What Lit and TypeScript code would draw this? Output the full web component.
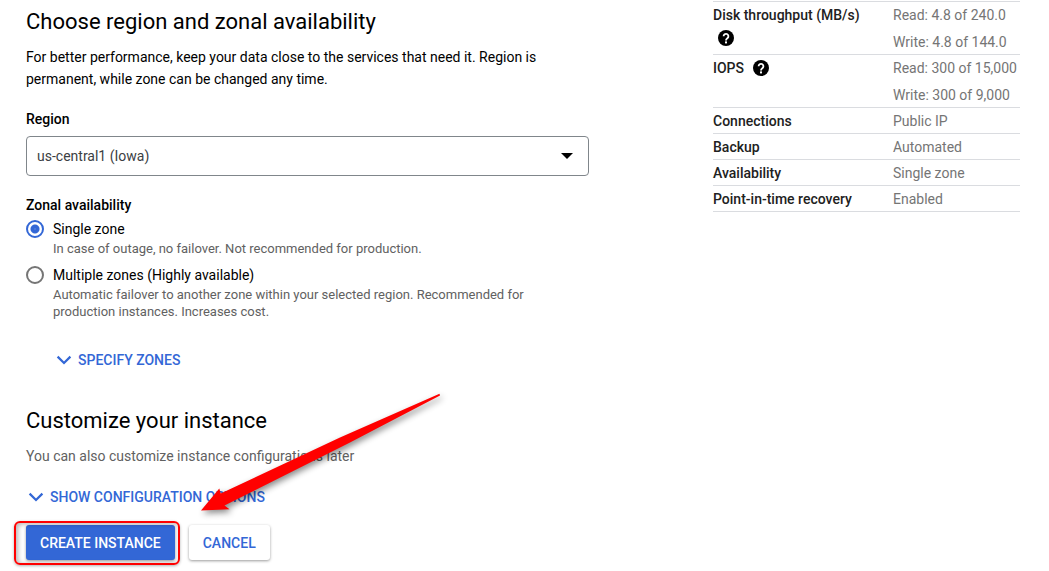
import { LitElement, html, css } from "lit";
import { customElement, property, state } from "lit/decorators.js";

interface SummaryRow {
  label: string;
  help?: boolean;
  values: string[];
}

const summary: SummaryRow[] = [
  { label: "Disk throughput (MB/s)", help: true, values: ["Read: 4.8 of 240.0", "Write: 4.8 of 144.0"] },
  { label: "IOPS", help: true, values: ["Read: 300 of 15,000", "Write: 300 of 9,000"] },
  { label: "Connections", values: ["Public IP"] },
  { label: "Backup", values: ["Automated"] },
  { label: "Availability", values: ["Single zone"] },
  { label: "Point-in-time recovery", values: ["Enabled"] },
];

const zoneOptions = [
  {
    id: "single",
    label: "Single zone",
    hint: "In case of outage, no failover. Not recommended for production.",
  },
  {
    id: "multiple",
    label: "Multiple zones (Highly available)",
    hint: "Automatic failover to another zone within your selected region. Recommended for production instances. Increases cost.",
  },
];

const chevron = html`<svg class="chevron" width="16" height="10" viewBox="0 0 16 10" aria-hidden="true">
  <path d="M1.6 1.6 8 8l6.400-6.400" fill="none" stroke="currentColor" stroke-width="2.200" />
</svg>`;

@customElement("summary-table")
export class SummaryTable extends LitElement {
  @property({ attribute: false }) rows: SummaryRow[] = [];

  static styles = css`
    :host {
      display: block;
    }
    .table {
      width: 100%;
      border-collapse: separate;
      border-spacing: 0;
      border-top: 1px solid #dadce0;
      font-size: 14px;
      line-height: 23px;
    }
    .label,
    .value {
      padding: 2px 0 0;
      border-bottom: 1px solid #dadce0;
      text-align: left;
      vertical-align: top;
    }
    .label {
      width: 168px;
      padding-right: 12px;
      color: #212121;
      font-weight: 500;
    }
    .value {
      color: #757575;
      white-space: nowrap;
    }
    .line + .line {
      margin-top: 4px;
    }
    .help {
      display: inline-block;
      margin: 0 0 2px 5px;
      vertical-align: middle;
    }
  `;

  render() {
    return html`<table class="table">
      <tbody>
        ${this.rows.map(
          (row) => html`<tr>
            <th class="label" scope="row">
              ${row.label}
              ${row.help
                ? html`<svg class="help" width="16" height="16" viewBox="0 0 16 16" role="img" aria-label="Help">
                    <circle cx="8" cy="8" r="8" fill="#000" />
                    <path
                      d="M5.600 6.300a2.400 2.400 0 1 1 4 1.700C8.600 8.900 8 9.200 8 10.400"
                      fill="none"
                      stroke="#fff"
                      stroke-width="1.800"
                    />
                    <rect x="7" y="11.400" width="2" height="2" fill="#fff" />
                  </svg>`
                : null}
            </th>
            <td class="value">${row.values.map((v) => html`<div class="line">${v}</div>`)}</td>
          </tr>`
        )}
      </tbody>
    </table>`;
  }
}

@customElement("app-root")
export class AppRoot extends LitElement {
  @state() private zone = "single";

  static styles = css`
    :host {
      display: block;
      position: relative;
      box-sizing: border-box;
      min-height: 100vh;
      overflow: hidden;
      background: #fff;
      color: #000;
      font-family: Roboto, "Liberation Sans", sans-serif;
      font-size: 14px;
      line-height: 22px;
    }
    .page {
      display: grid;
      grid-template-columns: minmax(0, 1fr) 307px;
      column-gap: 124px;
      align-items: start;
      padding: 0 29px 0 26px;
    }
    .form {
      padding-top: 8px;
    }
    .side {
      padding-top: 1px;
    }
    .title {
      margin: 0;
      font-size: 22px;
      font-weight: 400;
      line-height: 28px;
    }
    .text {
      margin: 10px 0 0;
    }
    .muted {
      color: #616161;
    }
    .label {
      display: block;
      margin: 18px 0 6px;
      font-weight: 500;
    }
    .select-box {
      position: relative;
    }
    .select {
      display: block;
      box-sizing: border-box;
      width: 100%;
      height: 40px;
      padding: 0 40px 0 10px;
      border: 1px solid #80868b;
      border-radius: 4px;
      background: #fff;
      color: #3c4043;
      font: inherit;
      appearance: none;
    }
    .caret {
      position: absolute;
      top: 17px;
      right: 16px;
      pointer-events: none;
    }
    .zones {
      margin: 0;
      padding: 0;
      border: 0;
    }
    .legend {
      padding: 18px 0 2px;
      font-weight: 500;
    }
    .option {
      display: grid;
      grid-template-columns: 18px 1fr;
      column-gap: 9px;
      align-items: center;
      margin-bottom: 7px;
    }
    .radio {
      box-sizing: border-box;
      width: 18px;
      height: 18px;
      margin: 0;
      border: 2px solid #757575;
      border-radius: 50%;
      appearance: none;
    }
    .radio:checked {
      border-color: #3367d6;
      background: radial-gradient(circle, #7a9ce4 0, #3367d6 1px, #3367d6 4px, #fff 5px);
    }
    .hint {
      grid-column: 2;
      color: #616161;
      font-size: 13px;
      line-height: 17px;
    }
    .expander {
      display: flex;
      align-items: center;
      gap: 6px;
      padding: 0;
      border: 0;
      background: none;
      color: #3367d6;
      font: inherit;
      font-weight: 500;
      text-transform: uppercase;
    }
    .specify {
      margin: 22px 0 36px 30px;
    }
    .show {
      margin: 19px 0 17px 2px;
    }
    .actions {
      display: flex;
      gap: 14px;
    }
    .button {
      height: 35px;
      padding: 0 14px;
      border: 0;
      border-radius: 3px;
      box-shadow: 0 1px 3px rgba(0, 0, 0, 0.4);
      background: #fff;
      color: #3367d6;
      font: inherit;
      font-weight: 500;
      text-transform: uppercase;
    }
    .primary {
      position: relative;
      background: #3367d6;
      color: #fff;
    }
    .marker {
      position: absolute;
      inset: -4px -5px -5px -12px;
      border: 2px solid #f00;
      border-radius: 6px;
      box-shadow: 0 1px 3px rgba(0, 0, 0, 0.3), inset 2px 1px 5px rgba(0, 0, 0, 0.3);
      pointer-events: none;
    }
    .arrow {
      position: absolute;
      left: 190px;
      top: 385px;
      pointer-events: none;
      filter: drop-shadow(2px 3px 3px rgba(0, 0, 0, 0.45));
    }
  `;

  render() {
    return html`
      <main class="page">
        <form class="form">
          <h2 class="title">Choose region and zonal availability</h2>
          <p class="text">
            For better performance, keep your data close to the services that need it. Region is permanent, while zone
            can be changed any time.
          </p>
          <label class="label" for="region">Region</label>
          <div class="select-box">
            <select class="select" id="region">
              <option>us-central1 (Iowa)</option>
            </select>
            <svg class="caret" width="12" height="6" viewBox="0 0 12 6" aria-hidden="true">
              <path d="M0 0h12L6 6z" />
            </svg>
          </div>
          <fieldset class="zones">
            <legend class="legend">Zonal availability</legend>
            ${zoneOptions.map(
              (o) => html`<div class="option">
                <input
                  class="radio"
                  type="radio"
                  name="zone"
                  id=${o.id}
                  .checked=${this.zone === o.id}
                  @change=${() => (this.zone = o.id)}
                />
                <label for=${o.id}>${o.label}</label>
                <div class="hint">${o.hint}</div>
              </div>`
            )}
          </fieldset>
          <button class="expander specify" type="button">${chevron}Specify zones</button>
          <h2 class="title">Customize your instance</h2>
          <p class="text muted">You can also customize instance configurations later</p>
          <button class="expander show" type="button">${chevron}Show configuration options</button>
          <div class="actions">
            <button class="button primary" type="button">Create instance<span class="marker"></span></button>
            <button class="button" type="button">Cancel</button>
          </div>
        </form>
        <aside class="side"><summary-table .rows=${summary}></summary-table></aside>
      </main>
      <svg class="arrow" width="260" height="135" viewBox="0 0 260 135" aria-hidden="true">
        <path
          d="M249.500 8.800 150 52.500 30.700 108.500 29.300 103.500 11 125.500 39.500 124.300 34.500 120.500 160 57.500 250 10.500z"
          fill="#f00"
        />
      </svg>
    `;
  }
}
